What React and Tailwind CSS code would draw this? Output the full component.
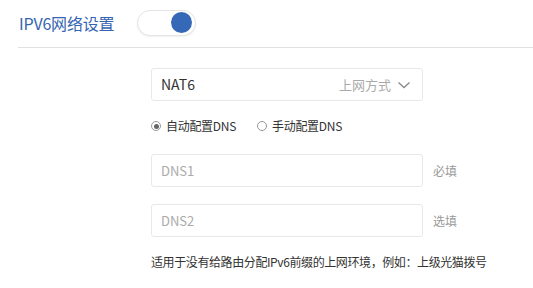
export default function App() {
  const font = { fontFamily: '"Noto Sans CJK SC", "Noto Sans", sans-serif' };
  return (
    <div className="w-[533px] h-[288px] bg-white overflow-hidden" style={font}>
      <div className="flex items-center h-[44px] pl-[19px] pt-[1px]">
        <span className="text-[16px] leading-none text-[#3565b0] tracking-[-0.2px]">IPV6网络设置</span>
        <div className="ml-[23px] w-[59px] h-[26px] rounded-full border border-[#e4e4e4] bg-white shadow-[0_1px_2px_rgba(0,0,0,0.06)] flex items-center justify-end pr-[3px]">
          <div className="w-[21px] h-[21px] rounded-full bg-[#3568b7]" />
        </div>
      </div>
      <div className="ml-[18px] h-[1px] bg-[#e0e0e0] mt-[3px]" />
      <div className="pl-[151px] pt-[20px] flex flex-col">
        <div className="w-[272px] h-[33px] border border-[#e8e8e8] rounded-[3px] flex items-center pl-[9px] pr-[11px]">
          <span className="text-[14px] text-[#333]">NAT6</span>
          <span className="ml-auto text-[13px] text-[#aaaaaa]">上网方式</span>
          <svg className="ml-[6px]" width="14" height="14" viewBox="0 0 14 14" fill="none">
            <path d="M1.5 4.5 L7 9.5 L12.5 4.5" stroke="#888" strokeWidth="1.3" />
          </svg>
        </div>
        <div className="flex items-center mt-[16px] h-[18px] text-[12px] text-[#333] tracking-[-0.3px]">
          <span className="w-[10px] h-[10px] rounded-full border border-[#999] flex items-center justify-center">
            <span className="w-[5px] h-[5px] rounded-full bg-[#666]" />
          </span>
          <span className="ml-[5px]">自动配置DNS</span>
          <span className="ml-[21px] w-[10px] h-[10px] rounded-full border border-[#999]" />
          <span className="ml-[5px]">手动配置DNS</span>
        </div>
        <div className="flex items-center mt-[19px]">
          <div className="w-[272px] h-[33px] border border-[#e8e8e8] rounded-[3px] flex items-center pl-[9px] text-[13px] text-[#aaaaaa]">DNS1</div>
          <span className="ml-[10px] text-[12px] text-[#999]">必填</span>
        </div>
        <div className="flex items-center mt-[17px]">
          <div className="w-[272px] h-[33px] border border-[#e8e8e8] rounded-[3px] flex items-center pl-[9px] text-[13px] text-[#aaaaaa]">DNS2</div>
          <span className="ml-[10px] text-[12px] text-[#999]">选填</span>
        </div>
        <div className="mt-[16px] text-[12px] text-[#333] tracking-[-0.4px]">适用于没有给路由分配IPv6前缀的上网环境，例如：上级光猫拨号</div>
      </div>
    </div>
  );
}
